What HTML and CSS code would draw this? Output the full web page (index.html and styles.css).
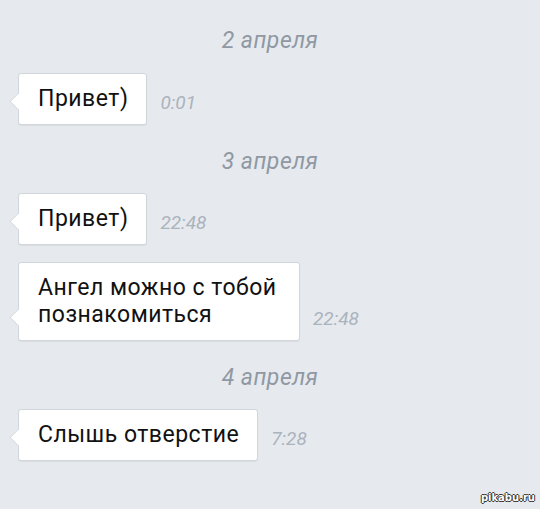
FILE: index.html
```html
<!DOCTYPE html>
<html lang="ru">
<head>
  <meta charset="UTF-8" />
  <meta name="viewport" content="width=device-width, initial-scale=1.0"/>
  <title>Диалог</title>
  <link rel="stylesheet" href="styles.css">
</head>
<body>

  <div class="chat">

    <div class="date">2 апреля</div>
    <div class="msg">
      <div class="bubble">Привет)</div>
      <div class="time">0:01</div>
    </div>

    <div class="date">3 апреля</div>
    <div class="msg">
      <div class="bubble">Привет)</div>
      <div class="time">22:48</div>
    </div>
    <div class="msg">
      <div class="bubble">Ангел можно с тобой познакомиться</div>
      <div class="time">22:48</div>
    </div>

    <div class="date">4 апреля</div>
    <div class="msg">
      <div class="bubble">Слышь отверстие</div>
      <div class="time">7:28</div>
    </div>

  </div>

  <div class="watermark">pikabu.ru</div>

</body>
</html>
```

FILE: styles.css
```css
body {
  margin: 0;
  padding: 0;
  background: #e6eaee;
  font-family: Roboto, "Noto Sans", sans-serif;
  height: 509px;
  overflow: hidden;
}

.chat {
  padding: 4px 0 0 18px;
}

.date {
  height: 30px;
  line-height: 30px;
  margin: 22px 0 16px;
  margin-left: -18px;
  text-align: center;
  font-size: 23px;
  letter-spacing: 0.5px;
  font-style: italic;
  color: #8f98a3;
}

.chat .date:first-child {
  margin-bottom: 17px;
}

.msg {
  display: flex;
  align-items: flex-end;
  margin-bottom: 17px;
}

.bubble {
  position: relative;
  box-sizing: border-box;
  max-width: 282px;
  padding: 11px 18px 12px 19px;
  font-size: 23px;
  letter-spacing: 0.5px;
  line-height: 27px;
  color: #111;
  background: #fff;
  border: 1px solid #d1d6dc;
  border-radius: 3px;
  box-shadow: 0 1px 1px rgba(0, 0, 0, 0.06);
}

.bubble::before {
  content: "";
  position: absolute;
  left: -7px;
  bottom: 16px;
  width: 12px;
  height: 12px;
  background: #fff;
  border-left: 1px solid #d1d6dc;
  border-bottom: 1px solid #d1d6dc;
  border-bottom-left-radius: 2px;
  transform: rotate(45deg);
}

.time {
  margin-left: 13px;
  margin-bottom: 10px;
  font-size: 19px;
  line-height: 24px;
  font-style: italic;
  color: #abb3bd;
}

.watermark {
  position: absolute;
  right: 5px;
  bottom: 6px;
  font-family: "DejaVu Sans", sans-serif;
  font-size: 10px;
  font-weight: bold;
  color: #fff;
  text-shadow: 1px 0 0 #333, -1px 0 0 #333, 0 1px 0 #333, 0 -1px 0 #333;
}
```
